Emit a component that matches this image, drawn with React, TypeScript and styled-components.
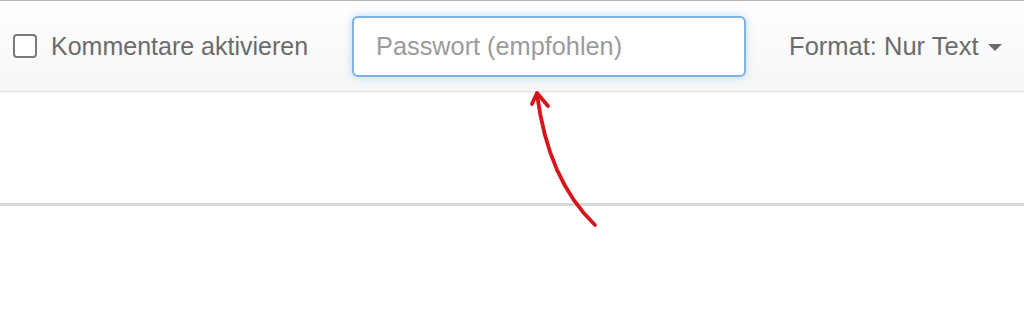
import React from 'react'
import styled, { createGlobalStyle } from 'styled-components';

const Global = createGlobalStyle`
  html, body {
    margin: 0;
    padding: 0;
    background: #fff;
    font-family: "Liberation Sans", Arial, sans-serif;
  }
`;

const Page = styled.div`
  position: relative;
  width: 1024px;
  height: 331px;
  overflow: hidden;
`;

const Toolbar = styled.div`
  display: flex;
  align-items: center;
  height: 92px;
  padding: 0 0 0 13px;
  box-sizing: border-box;
  border-top: 1px solid #b5b5b5;
  border-bottom: 1px solid #e2e2e2;
  background: linear-gradient(#ffffff, #f6f6f6);
  box-shadow: 0 1px 2px rgba(0, 0, 0, .06);
`;

const CheckLabel = styled.label`
  display: flex;
  align-items: center;
  gap: 14px;
  font-size: 25px;
  color: #6b6b6b;
`;

const Box = styled.span`
  width: 20px;
  height: 20px;
  border: 2px solid #7a7a7a;
  border-radius: 4px;
  background: #fff;
`;

const Input = styled.input`
  margin-left: 44px;
  width: 394px;
  height: 61px;
  box-sizing: border-box;
  padding: 0 22px;
  border: 2px solid #7eb2e2;
  border-radius: 6px;
  font-family: inherit;
  font-size: 25.3px;
  color: #555;
  outline: none;
  box-shadow: 0 0 8px rgba(102, 175, 233, .45);

  &::placeholder {
    color: #9b9b9b;
  }
`;

const Format = styled.div`
  display: flex;
  align-items: center;
  gap: 10px;
  margin-left: 43px;
  font-size: 25.5px;
  color: #6b6b6b;
`;

const Caret = styled.span`
  width: 0;
  height: 0;
  border-left: 7px solid transparent;
  border-right: 7px solid transparent;
  border-top: 7px solid #6b6b6b;
  margin-top: 2px;
`;

const Body = styled.div`
  height: 111px;
  border-bottom: 3px solid #d9d9d9;
`;

const Arrow = styled.svg`
  position: absolute;
  left: 0;
  top: 0;
  pointer-events: none;
`;

export default function App() {
  return <>
    <Global />
    <Page>
      <Toolbar>
        <CheckLabel><Box />Kommentare aktivieren</CheckLabel>
        <Input placeholder="Passwort (empfohlen)" />
        <Format>Format: Nur Text <Caret /></Format>
      </Toolbar>
      <Body />
      <Arrow width="1024" height="331" viewBox="0 0 1024 331">
        <path d="M595 225 Q548 180 537 94" fill="none" stroke="#d7151c" strokeWidth="3.8" strokeLinecap="round" />
        <path d="M532 104 L537 93 L548 106" fill="none" stroke="#d7151c" strokeWidth="3.8" strokeLinecap="round" strokeLinejoin="round" />
      </Arrow>
    </Page>
  </>
};
